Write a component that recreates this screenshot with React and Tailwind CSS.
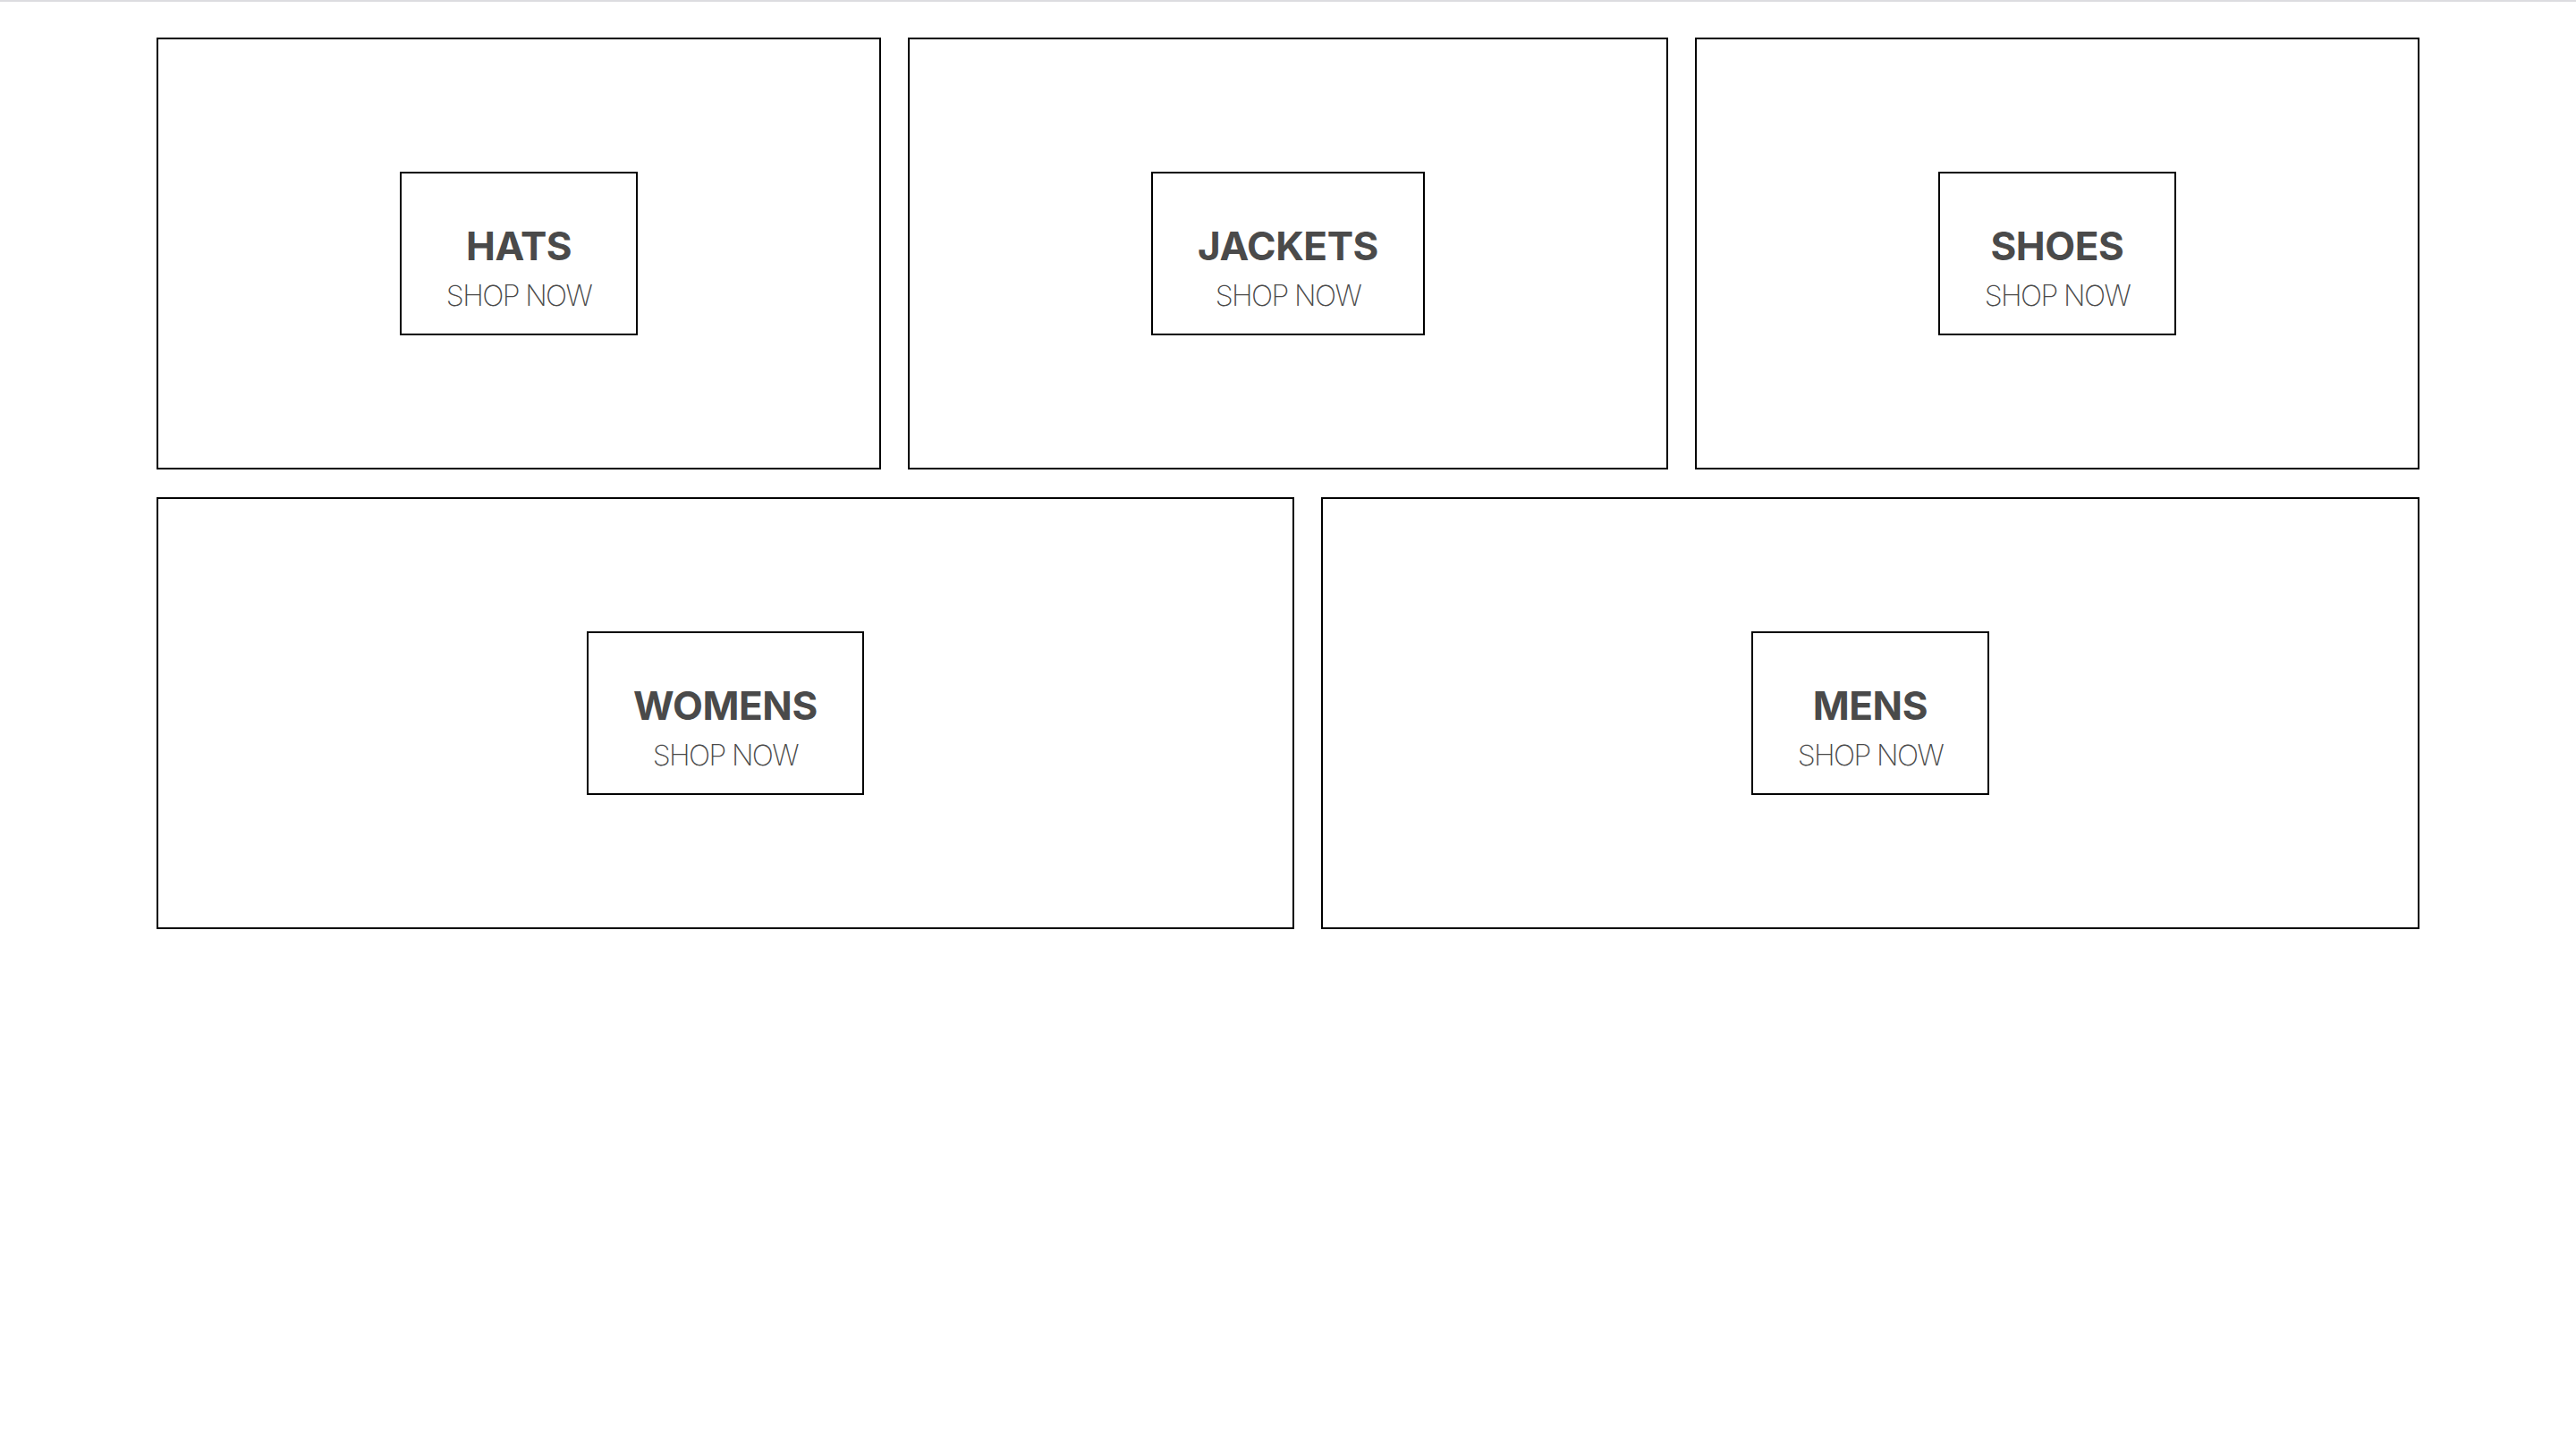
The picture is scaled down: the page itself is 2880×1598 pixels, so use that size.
const sections = [
  { id: 1, title: 'HATS' },
  { id: 2, title: 'JACKETS' },
  { id: 3, title: 'SHOES' },
  { id: 4, title: 'WOMENS' },
  { id: 5, title: 'MENS' },
];

function MenuItem({ title }) {
  return (
    <div className="flex-auto min-w-[30%] h-[483px] mx-[15px] mb-[31px] flex items-center justify-center border-2 border-black">
      <div className="h-[183px] px-[50px] pt-[33px] flex flex-col items-center justify-center border-2 border-black bg-white">
        <h1 className="text-[44px] leading-none font-bold tracking-[-0.01em] text-[#4a4a4a] mb-[18px]">{title}</h1>
        <span className="text-[32px] leading-none font-extralight tracking-[-0.05em] text-[#4a4a4a]">SHOP NOW</span>
      </div>
    </div>
  );
}

export default function App() {
  return (
    <div className="min-h-screen bg-white font-['Inter',sans-serif]">
      <div className="h-[2px] bg-[#dcdce0]" />
      <div className="px-[160px] pt-[40px]">
        <div className="w-full flex flex-wrap justify-between">
          {sections.map(s => (
            <MenuItem key={s.id} title={s.title} />
          ))}
        </div>
      </div>
    </div>
  );
}
